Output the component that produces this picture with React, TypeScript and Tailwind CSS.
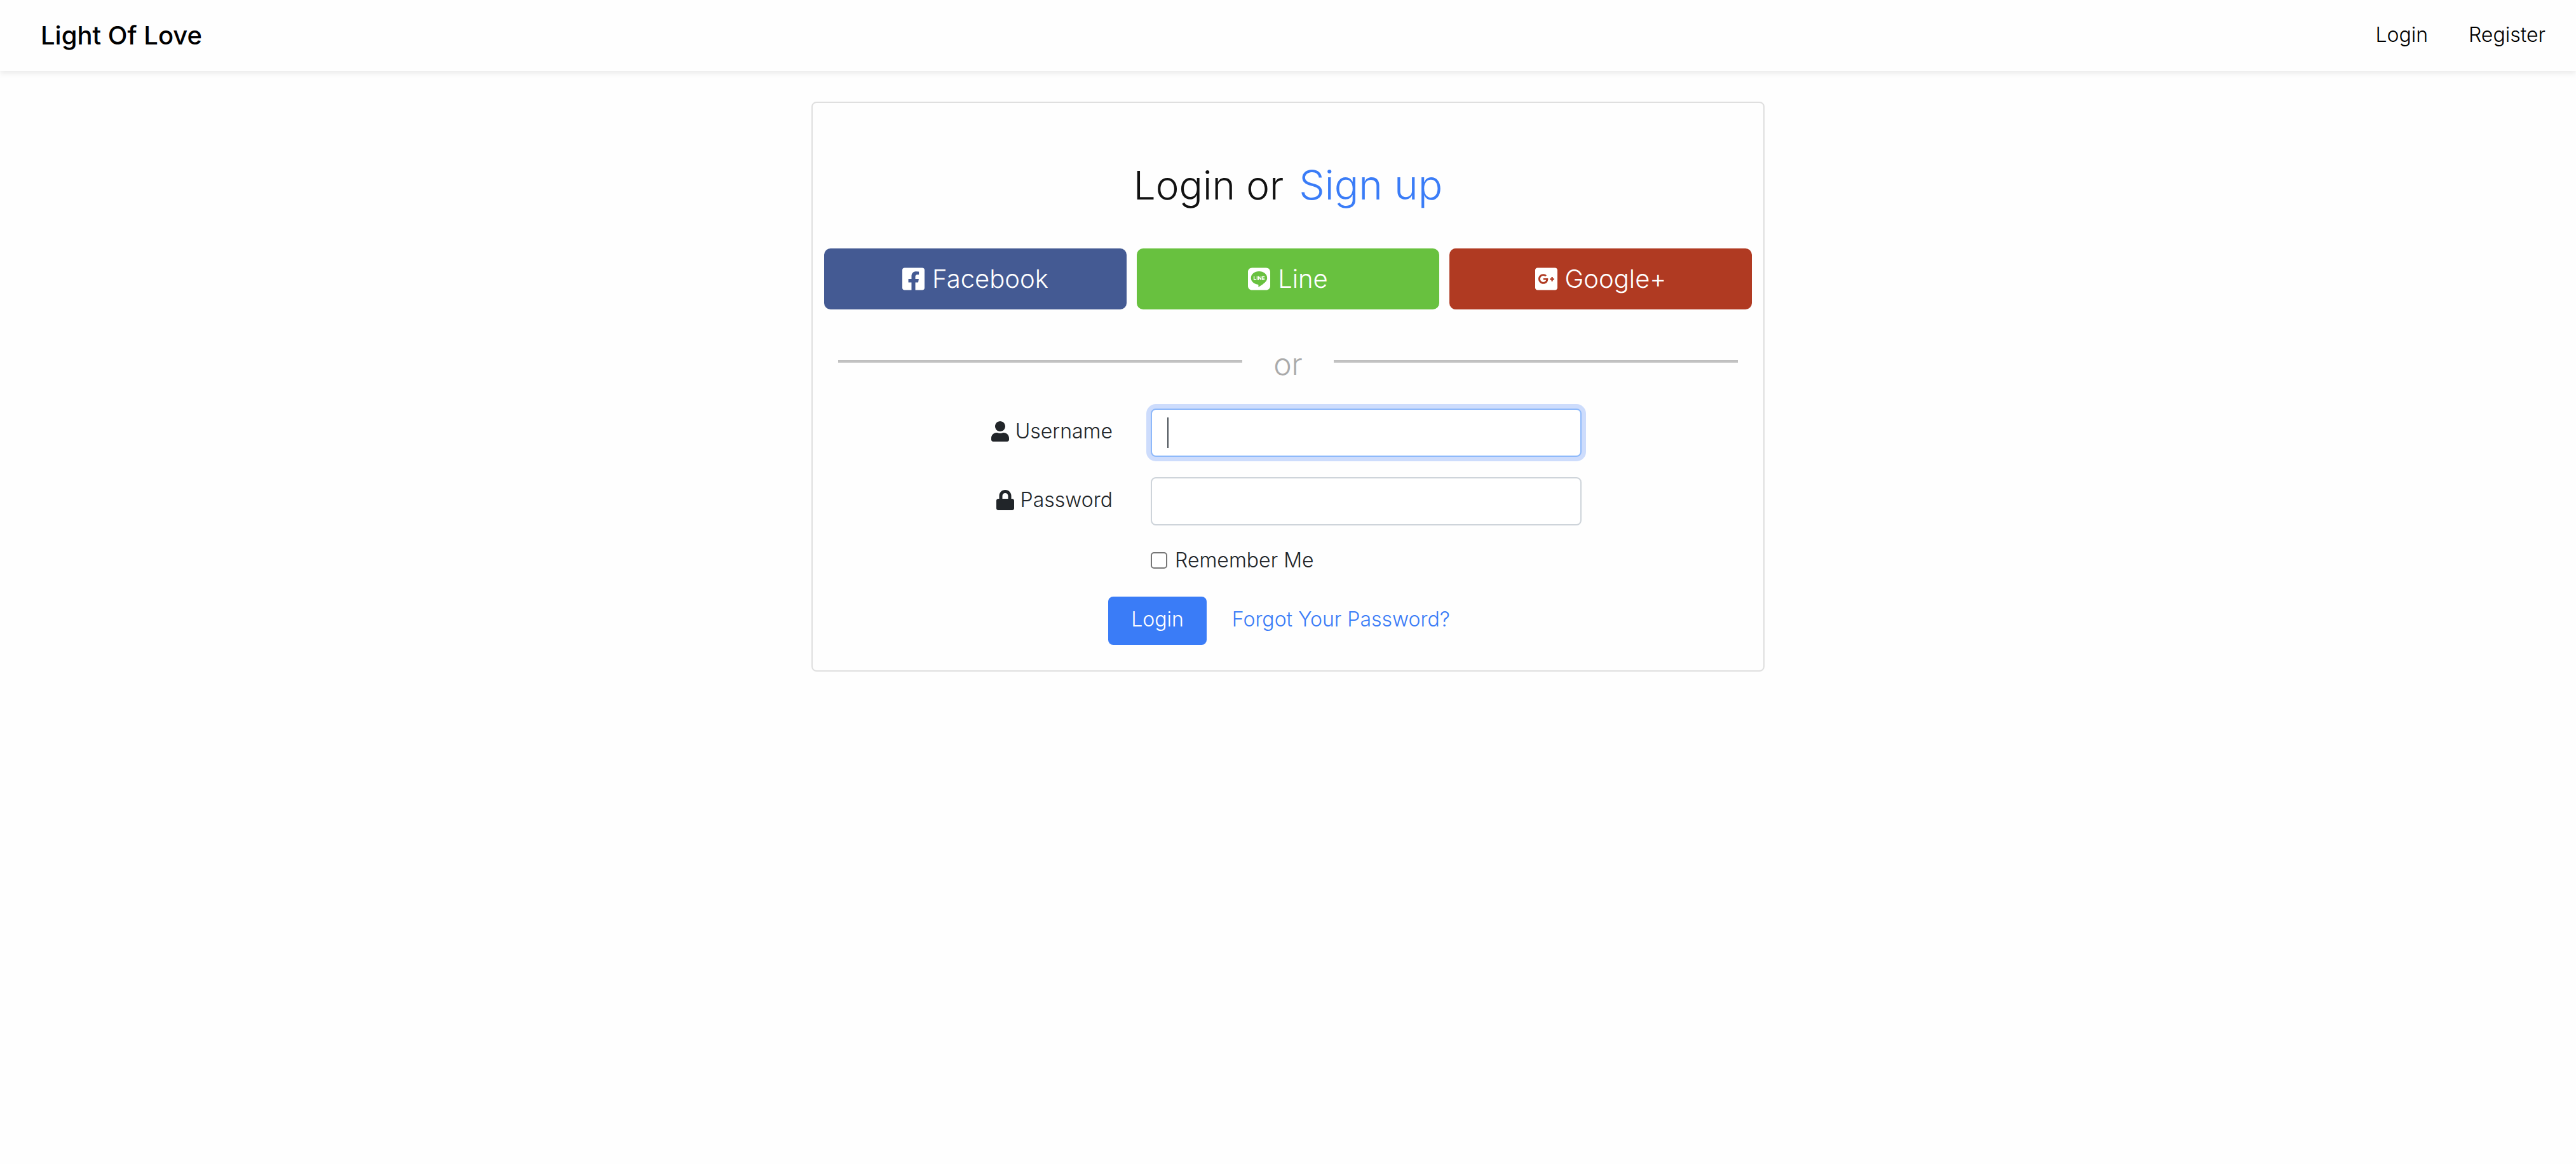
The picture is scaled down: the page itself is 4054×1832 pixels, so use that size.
import type { ReactNode } from "react";
import type { IconType } from "react-icons";
import { FaFacebookSquare, FaGooglePlusSquare, FaLine, FaLock, FaUser } from "react-icons/fa";

function Navbar() {
  return (
    <header className="flex h-28 items-center justify-between bg-[#fefefe] pr-12 pl-16 text-black shadow-[0_4px_8px_rgba(0,0,0,0.075)]">
      <a href="#home" className="text-[40px] leading-[60px] font-medium">
        Light Of Love
      </a>
      <nav className="flex gap-16 pb-0.5 text-[32px] leading-[48px]">
        <a href="#login">Login</a>
        <a href="#register">Register</a>
      </nav>
    </header>
  );
}

function SocialButton({ icon: Icon, className, children }: { icon: IconType; className: string; children: ReactNode }) {
  return (
    <button
      type="button"
      className={`flex h-24 items-center justify-center gap-3 rounded-[10px] text-[40px] leading-[60px] text-white ${className}`}
    >
      <Icon className="h-10 w-[35px]" aria-hidden />
      {children}
    </button>
  );
}

function FieldLabel({ htmlFor, icon: Icon, children }: { htmlFor: string; icon: IconType; children: ReactNode }) {
  return (
    <label htmlFor={htmlFor} className="col-start-1 flex items-center justify-end gap-[10px] pt-3 leading-[48px]">
      <Icon className="h-8 w-7" aria-hidden />
      {children}
    </label>
  );
}

function Divider() {
  return (
    <div className="mx-[22px] mt-14 flex items-start">
      <span className="mt-6 h-1 flex-1 border-t-2 border-[#b7b7b7] bg-[#cecece]" />
      <span className="w-36 text-center text-5xl leading-[60px] text-[#aaaaaa]">or</span>
      <span className="mt-6 h-1 flex-1 border-t-2 border-[#b7b7b7] bg-[#cecece]" />
    </div>
  );
}

export default function App() {
  return (
    <div className="min-h-screen bg-[#fefefe] font-['Inter','Liberation_Sans',sans-serif] text-[32px] font-light text-[#212529]">
      <Navbar />
      <main className="py-12">
        <section className="mx-auto max-w-[1500px] rounded-lg border-2 border-[#dfdfdf] px-[18px] pt-[90px] pb-10">
          <h1 className="flex items-baseline justify-center gap-6 text-[62px] leading-[78px] text-[#111111]">
            Login or
            <a href="#register" className="text-[64px] text-[#3a7cf7]">
              Sign up
            </a>
          </h1>

          <div className="mt-[60px] grid grid-cols-3 gap-4">
            <SocialButton icon={FaFacebookSquare} className="bg-[#445a93]">
              Facebook
            </SocialButton>
            <SocialButton icon={FaLine} className="bg-[#68c13f]">
              Line
            </SocialButton>
            <SocialButton icon={FaGooglePlusSquare} className="bg-[#b03a22]">
              Google+
            </SocialButton>
          </div>

          <Divider />

          <form className="mt-10" onSubmit={(e) => e.preventDefault()}>
            <div className="grid grid-cols-[454fr_678fr_208fr] items-start gap-x-[60px] gap-y-8">
              <FieldLabel htmlFor="username" icon={FaUser}>
                Username
              </FieldLabel>
              <div className="relative">
                <input
                  id="username"
                  type="text"
                  autoFocus
                  className="block h-[76px] w-full rounded-lg border-2 border-[#8eb9fa] bg-white px-6 text-[#495057] caret-transparent shadow-[0_0_0_7px_#cddcfc] outline-none"
                />
                <span className="pointer-events-none absolute top-[14px] left-[26px] h-12 w-0.5 bg-[#495057]" />
              </div>

              <FieldLabel htmlFor="password" icon={FaLock}>
                Password
              </FieldLabel>
              <input
                id="password"
                type="password"
                className="col-start-2 block h-[76px] w-full rounded-lg border-2 border-[#ced4da] bg-white px-6 text-[#495057] outline-none"
              />

              <label className="col-start-2 flex items-center gap-3 leading-[46px]">
                <input
                  type="checkbox"
                  name="remember"
                  className="size-[26px] appearance-none rounded-[5px] border-2 border-[#767676] bg-white"
                />
                Remember Me
              </label>
            </div>

            <div className="mt-[34px] flex items-center justify-center gap-3 leading-[48px]">
              <button type="submit" className="rounded-lg bg-[#3a7cf7] px-9 pt-3 pb-4 text-white">
                Login
              </button>
              <a href="#forgot" className="px-7 pt-3 pb-4 text-[#3a7cf7]">
                Forgot Your Password?
              </a>
            </div>
          </form>
        </section>
      </main>
    </div>
  );
}
